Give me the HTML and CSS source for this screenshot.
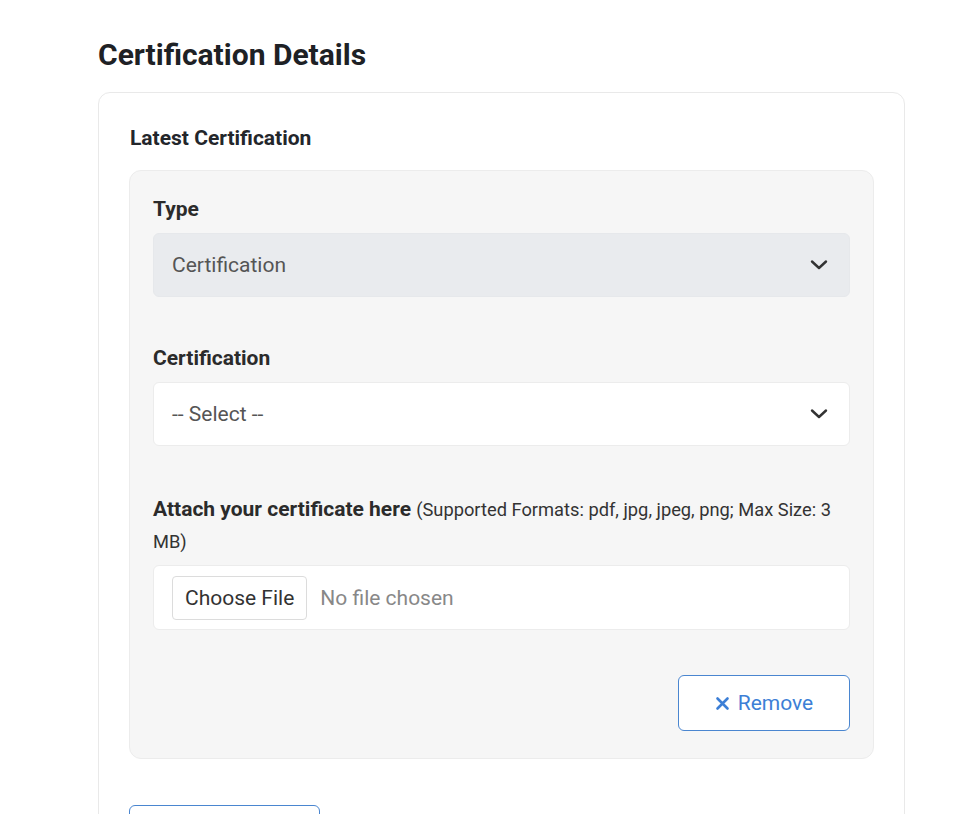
FILE: index.html
```html
<!DOCTYPE html>
<html>
<head>
<meta charset="utf-8">
<link rel="stylesheet" href="styles.css">
</head>
<body>
<div class="page">
  <h1 class="title">Certification Details</h1>
  <div class="card">
    <h2 class="card-title">Latest Certification</h2>
    <div class="panel">
      <div class="field">
        <label class="label">Type</label>
        <div class="select disabled">
          <span>Certification</span>
          <svg class="chev" width="18" height="12" viewBox="0 0 18 12"><path d="M2 2.5 L9 9 L16 2.5" fill="none" stroke="#333" stroke-width="2.4" stroke-linecap="round" stroke-linejoin="round"/></svg>
        </div>
      </div>
      <div class="field">
        <label class="label">Certification</label>
        <div class="select">
          <span>-- Select --</span>
          <svg class="chev" width="18" height="12" viewBox="0 0 18 12"><path d="M2 2.5 L9 9 L16 2.5" fill="none" stroke="#333" stroke-width="2.4" stroke-linecap="round" stroke-linejoin="round"/></svg>
        </div>
      </div>
      <div class="field last">
        <label class="label attach"><b>Attach your certificate here</b> <span class="hint">(Supported Formats: pdf, jpg, jpeg, png; Max Size: 3 MB)</span></label>
        <div class="file">
          <span class="file-btn">Choose File</span>
          <span class="file-name">No file chosen</span>
        </div>
      </div>
      <div class="actions">
        <button class="btn-remove"><svg width="15" height="15" viewBox="0 0 15 15"><path d="M2.5 2.5 L12.5 12.5 M12.5 2.5 L2.5 12.5" stroke="#3d7fd6" stroke-width="2.6" stroke-linecap="round"/></svg>Remove</button>
      </div>
    </div>
    <div class="add-row">
      <button class="btn-add"></button>
    </div>
  </div>
</div>
</body>
</html>
```
FILE: styles.css
```css
* { box-sizing: border-box; }
body {
  margin: 0;
  font-family: Roboto, "Liberation Sans", sans-serif;
  color: #212529;
  background: #fff;
}
.page {
  padding: 37px 70px 0 98px;
}
.title {
  margin: 0 0 19px;
  font-size: 30px;
  font-weight: 700;
  line-height: 36px;
  color: #1e2125;
}
.card {
  border: 1px solid #e9e9e9;
  border-radius: 12px;
  padding: 32px 30px 0 30px;
}
.card-title {
  margin: 0 0 19px 1px;
  font-size: 21px;
  font-weight: 700;
  line-height: 26px;
  color: #23262b;
}
.panel {
  background: #f6f6f6;
  border: 1px solid #ececec;
  border-radius: 12px;
  padding: 25px 23px 27px 23px;
}
.field {
  margin-bottom: 48px;
}
.field.last {
  margin-top: -1px;
  margin-bottom: 45px;
}
.label {
  display: block;
  font-size: 21px;
  font-weight: 700;
  line-height: 26px;
  color: #2b2b2b;
  margin-bottom: 11px;
}
.label.attach {
  font-weight: 400;
  line-height: 32px;
  margin-bottom: 8px;
}
.label.attach b {
  font-weight: 700;
}
.hint {
  font-size: 18.3px;
  line-height: 20px;
  color: #333;
}
.select {
  height: 64px;
  background: #fff;
  border: 1px solid #ececec;
  border-radius: 6px;
  display: flex;
  align-items: center;
  justify-content: space-between;
  padding: 0 21px 0 18px;
  font-size: 21px;
  color: #555;
}
.select.disabled {
  background: #e9ebee;
  border-color: #e6e8eb;
}
.file {
  height: 65px;
  background: #fff;
  border: 1px solid #ececec;
  border-radius: 6px;
  display: flex;
  align-items: center;
  padding: 0 18px;
  font-size: 21px;
}
.file-btn {
  height: 44px;
  display: flex;
  align-items: center;
  padding: 0 12px;
  border: 1px solid #dcdcdc;
  border-radius: 4px;
  color: #333;
  background: #fff;
}
.file-name {
  margin-left: 13px;
  color: #888;
}
.actions {
  display: flex;
  justify-content: flex-end;
}
.btn-remove {
  width: 172px;
  height: 56px;
  border: 1px solid #4a86d0;
  border-radius: 6px;
  background: #fff;
  color: #3d7fd6;
  font-family: inherit;
  font-size: 21px;
  display: flex;
  align-items: center;
  justify-content: center;
  gap: 8px;
}
.add-row {
  padding-top: 46px;
}
.btn-add {
  display: block;
  width: 191px;
  height: 40px;
  border: 1px solid #4a86d0;
  border-radius: 6px;
  background: #fff;
}
```
